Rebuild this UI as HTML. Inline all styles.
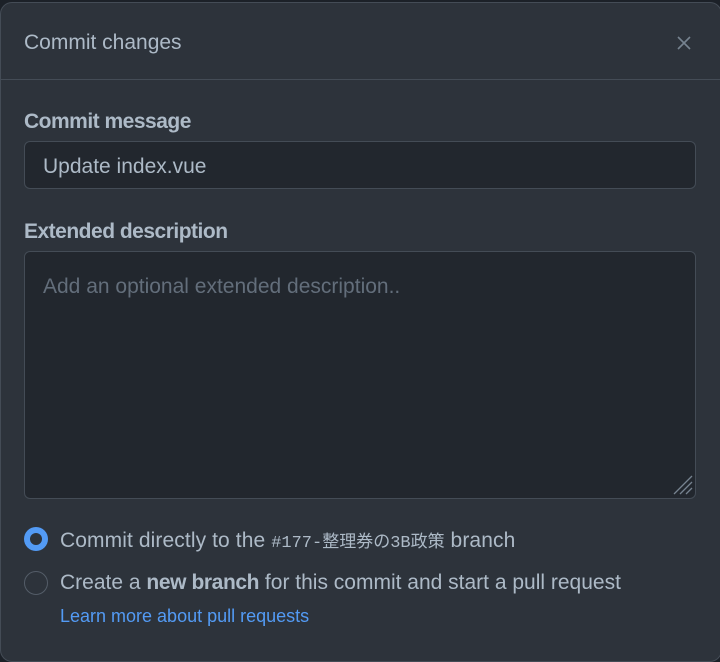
<!DOCTYPE html>
<html><head><meta charset="utf-8"><style>
html,body{margin:0;padding:0;background:#1c2128;width:720px;height:652px;overflow:hidden}
body{font-family:"Liberation Sans","Noto Sans CJK JP",sans-serif;color:#adbac7}
.panel{position:absolute;left:0;top:2px;width:722px;height:660px;background:#2d333b;border:1px solid #444c56;border-radius:12px;box-sizing:border-box}
.hdr{position:absolute;left:0;top:0;right:0;height:76px;border-bottom:1px solid #444c56}
.t{position:absolute;white-space:nowrap;font-size:21px}
.inp{position:absolute;background:#22272e;border:1px solid #444c56;border-radius:6px;box-sizing:border-box}
</style></head><body>
<div class="panel"><div class="hdr"></div></div>
<div class="t" style="left:24px;top:31px">Commit changes</div>
<svg style="position:absolute;left:677px;top:36px" width="14" height="14" viewBox="0 0 14 14"><path d="M1 1L13 13M13 1L1 13" stroke="#768390" stroke-width="1.6"/></svg>
<div class="t" style="left:24px;top:110px;font-weight:bold;letter-spacing:-0.5px">Commit message</div>
<div class="inp" style="left:24px;top:141px;width:672px;height:48px"></div>
<div class="t" style="left:43px;top:155px">Update index.vue</div>
<div class="t" style="left:24px;top:220px;font-weight:bold;letter-spacing:-0.5px">Extended description</div>
<div class="inp" style="left:24px;top:251px;width:672px;height:248px"></div>
<div class="t" style="left:43px;top:275px;color:#636e7b">Add an optional extended description..</div>
<svg style="position:absolute;left:672px;top:474px" width="22" height="22" viewBox="0 0 22 22"><path d="M20 2L2 20M20 8L8 20M20 14L14 20" stroke="#768390" stroke-width="1.3"/></svg>
<div style="position:absolute;left:24px;top:527px;width:24px;height:24px;border-radius:50%;background:#539bf5"><div style="position:absolute;left:6px;top:6px;width:12px;height:12px;border-radius:50%;background:#2d333b"></div></div>
<div class="t" style="left:60px;top:527px;letter-spacing:0.1px">Commit directly to the <span style="font-family:'Liberation Mono','Noto Sans CJK JP',monospace;font-size:17px;letter-spacing:0">#177-整理券の3B政策</span> branch</div>
<div style="position:absolute;left:24px;top:571px;width:24px;height:24px;border-radius:50%;border:1px solid #545d68;box-sizing:border-box"></div>
<div class="t" style="left:60px;top:571px">Create a <b style="letter-spacing:-0.4px">new branch</b> for this commit and start a pull request</div>
<div class="t" style="left:60px;top:606px;font-size:18px;color:#539bf5">Learn more about pull requests</div>
</body></html>
